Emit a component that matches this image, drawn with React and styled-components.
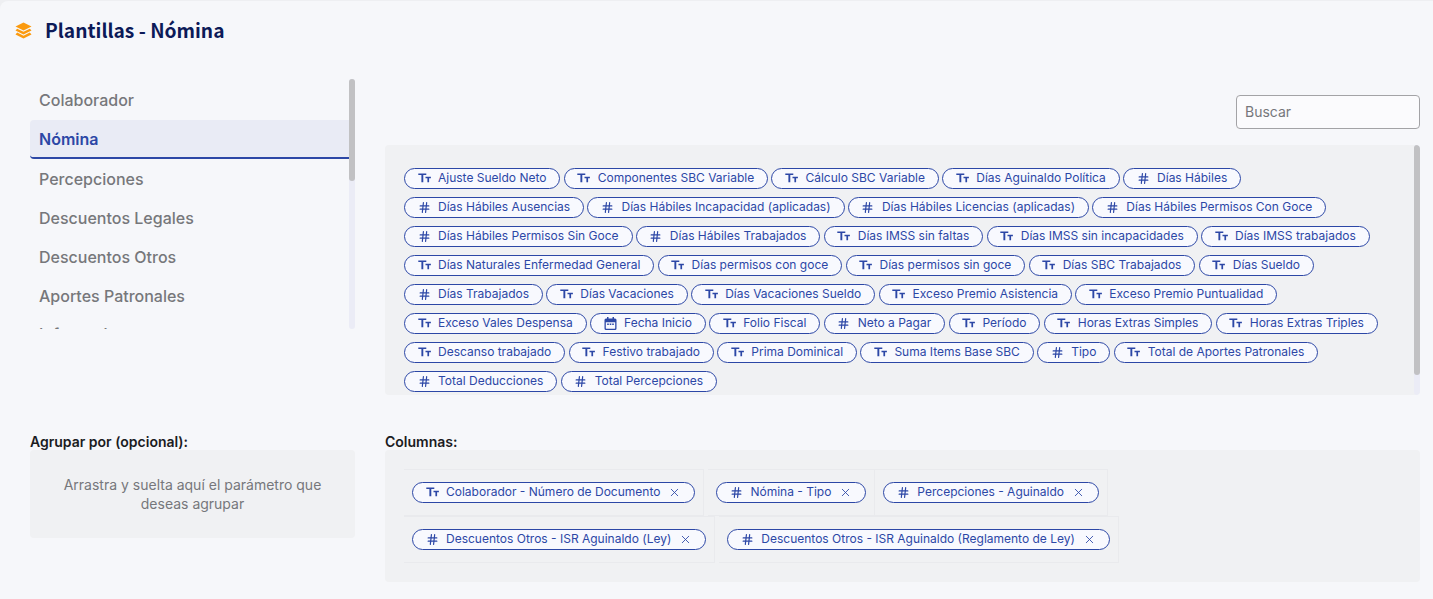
import React from "react";
import styled, { createGlobalStyle } from "styled-components";
import { Hash, X } from "lucide-react";

const GlobalStyle = createGlobalStyle`
  html, body {
    margin: 0;
    padding: 0;
    height: 100%;
    background: #eeeff2;
  }
  * {
    box-sizing: border-box;
  }
  #root {
    height: 100%;
  }
`;

const Page = styled.div`
  height: 599px;
  margin-top: 1px;
  padding: 0 13px 0 30px;
  background: #f6f7fa;
  border-top-left-radius: 8px;
  font-family: Inter, "Liberation Sans", sans-serif;
  overflow: hidden;
`;

const Header = styled.header`
  display: flex;
  align-items: center;
  gap: 13px;
  height: 58px;
  margin-left: -15px;
`;

const Title = styled.h1`
  margin: 0;
  color: #0c1a58;
  font-family: "Noto Sans CJK JP", "Noto Sans", sans-serif;
  font-size: 19.2px;
  font-weight: 700;
`;

const Top = styled.section`
  display: grid;
  grid-template-columns: 325px 1fr;
  column-gap: 30px;
  height: 337px;
  padding-top: 20px;
`;

const Bottom = styled.section`
  display: grid;
  grid-template-columns: 325px 1fr;
  column-gap: 30px;
  margin-top: 37px;
`;

const SideList = styled.nav`
  height: 250px;
  overflow: hidden;
  position: relative;
  padding-top: 2px;
`;

const Track = styled.div`
  position: absolute;
  top: 0;
  right: 0;
  width: 6px;
  height: 100%;
  background: #ebecf6;
  border-radius: 3px;
`;

const Thumb = styled.div`
  width: 6px;
  height: ${(p) => p.$size}px;
  background: #c1c1c3;
  border-radius: 3px;
`;

const SideItem = styled.div`
  display: flex;
  align-items: center;
  width: 319px;
  height: ${(p) => (p.$active ? "39px" : "39.2px")};
  margin-bottom: ${(p) => (p.$active ? "1px" : "0")};
  padding-left: 9px;
  font-size: 16px;
  font-weight: ${(p) => (p.$active ? 600 : 500)};
  color: ${(p) => (p.$active ? "#2c47a6" : "#76777b")};
  background: ${(p) => (p.$active ? "#e9ebf5" : "transparent")};
  border-bottom: 2px solid ${(p) => (p.$active ? "#2c47a6" : "transparent")};
  border-radius: 4px 0 0 4px;
  &:nth-child(7) {
    margin-top: -2px;
  }
`;

const RightColumn = styled.div`
  display: flex;
  flex-direction: column;
`;

const SearchRow = styled.div`
  display: flex;
  justify-content: flex-end;
  padding: 16px 0;
`;

const SearchInput = styled.input`
  width: 184px;
  height: 34px;
  padding: 0 8px 2px;
  background: #fbfbfd;
  border: 1px solid #a3a3a6;
  border-radius: 4px;
  font-family: inherit;
  font-size: 14px;
  outline: none;
  &::placeholder {
    color: #76777b;
    opacity: 1;
  }
`;

const Panel = styled.div`
  position: relative;
  height: 250px;
  background: #f0f1f3;
  border-radius: 4px;
  padding: 23px 19px 0;
  overflow: hidden;
`;

const ChipWrap = styled.div`
  display: flex;
  flex-wrap: wrap;
  gap: 8px 3.3px;
  width: 980px;
`;

const Chip = styled.span`
  display: inline-flex;
  align-items: center;
  height: 21px;
  padding: 0 13px 2px;
  color: #2c47a6;
  background: #f8f9fe;
  border: 1px solid #2c47a6;
  border-radius: 11px;
  font-size: 12px;
  white-space: nowrap;
  svg {
    flex: none;
  }
`;

const ChipIcon = styled.span`
  display: inline-flex;
  justify-content: center;
  width: 12px;
  margin: 1px 8px 0 0;
`;

const Close = styled(X)`
  margin: 1px 0 0 8px;
`;

const Label = styled.div`
  height: 17px;
  color: #1b1c1f;
  font-size: 14px;
  font-weight: 600;
  line-height: 17px;
  white-space: nowrap;
`;

const GroupBox = styled.div`
  display: flex;
  align-items: center;
  justify-content: center;
  height: 88px;
  padding: 0 30px;
  color: #76777b;
  background: #f0f1f3;
  border-radius: 4px;
  font-size: 14px;
  line-height: 19px;
  text-align: center;
`;

const ColumnsBox = styled.div`
  height: 132px;
  padding: 19px;
  background: #f0f1f3;
  border-radius: 4px;
`;

const ColumnRow = styled.div`
  display: flex;
  height: 47px;
`;

const ColumnCell = styled.div`
  display: flex;
  align-items: center;
  padding: 0 8px;
  margin-right: 4px;
  border: 1px solid #e9eaed;
  border-left: 0;
  &:nth-child(3) {
    margin-left: -4px;
  }
`;

const OrangeLayers = () => (
  <svg width="17" height="17" viewBox="0 0 17 17" fill="#fb9a0e">
    <path d="M8.500.500 16.500 4.500 8.500 8.500.500 4.500z" />
    <path d="M2.200 6.700 8.500 9.800 14.800 6.700 16.500 8.400 8.500 12.400.500 8.400z" />
    <path d="M2.200 10.600 8.500 13.700 14.800 10.600 16.500 12.400 8.500 16.500.500 12.400z" />
  </svg>
);

const TextIcon = () => (
  <svg width="13" height="12" viewBox="0 0 13 12" fill="currentColor">
    <path d="M0.300 1.500h8v1.600H5.300V10.300H3.400V3.100H0.300z" />
    <path d="M7.500 4.800h5.400v1.400h-1.800v4.100H9.400V6.200H7.500z" />
  </svg>
);

const CalendarIcon = () => (
  <svg width="13" height="13" viewBox="0 0 13 13" fill="currentColor">
    <path d="M3 0h1.500v1.500h4V0H10v1.500h1A1.500 1.500 0 0 1 12.500 3v8.500A1.500 1.500 0 0 1 11 13H2A1.500 1.500 0 0 1 .5 11.500V3A1.500 1.500 0 0 1 2 1.500h1zM1.800 5.200v6.100c0 .3.200.5.500.5h8.400c.3 0 .5-.2.500-.5V5.200z" />
    <path d="M3.200 6.500h1.600v1.500H3.200zM5.700 6.500h1.600v1.500H5.700zM8.200 6.500h1.600v1.500H8.200z" />
  </svg>
);

const icons = {
  t: <TextIcon />,
  h: <Hash size={13} strokeWidth={2.2} />,
  c: <CalendarIcon />,
};

const sections = [
  "Colaborador",
  "Nómina",
  "Percepciones",
  "Descuentos Legales",
  "Descuentos Otros",
  "Aportes Patronales",
  "Informativos",
];

const params = [
  ["t", "Ajuste Sueldo Neto"],
  ["t", "Componentes SBC Variable"],
  ["t", "Cálculo SBC Variable"],
  ["t", "Días Aguinaldo Política"],
  ["h", "Días Hábiles"],
  ["h", "Días Hábiles Ausencias"],
  ["h", "Días Hábiles Incapacidad (aplicadas)"],
  ["h", "Días Hábiles Licencias (aplicadas)"],
  ["h", "Días Hábiles Permisos Con Goce"],
  ["h", "Días Hábiles Permisos Sin Goce"],
  ["h", "Días Hábiles Trabajados"],
  ["t", "Días IMSS sin faltas"],
  ["t", "Días IMSS sin incapacidades"],
  ["t", "Días IMSS trabajados"],
  ["t", "Días Naturales Enfermedad General"],
  ["t", "Días permisos con goce"],
  ["t", "Días permisos sin goce"],
  ["t", "Días SBC Trabajados"],
  ["t", "Días Sueldo"],
  ["h", "Días Trabajados"],
  ["t", "Días Vacaciones"],
  ["t", "Días Vacaciones Sueldo"],
  ["t", "Exceso Premio Asistencia"],
  ["t", "Exceso Premio Puntualidad"],
  ["t", "Exceso Vales Despensa"],
  ["c", "Fecha Inicio"],
  ["t", "Folio Fiscal"],
  ["h", "Neto a Pagar"],
  ["t", "Período"],
  ["t", "Horas Extras Simples"],
  ["t", "Horas Extras Triples"],
  ["t", "Descanso trabajado"],
  ["t", "Festivo trabajado"],
  ["t", "Prima Dominical"],
  ["t", "Suma Items Base SBC"],
  ["h", "Tipo"],
  ["t", "Total de Aportes Patronales"],
  ["h", "Total Deducciones"],
  ["h", "Total Percepciones"],
];

const columnRows = [
  [
    ["t", "Colaborador - Número de Documento"],
    ["h", "Nómina - Tipo"],
    ["h", "Percepciones - Aguinaldo"],
  ],
  [
    ["h", "Descuentos Otros - ISR Aguinaldo (Ley)"],
    ["h", "Descuentos Otros - ISR Aguinaldo (Reglamento de Ley)"],
  ],
];

export default function App() {
  return (
    <>
      <GlobalStyle />
      <Page>
        <Header>
          <OrangeLayers />
          <Title>Plantillas - Nómina</Title>
        </Header>
        <Top>
          <SideList>
            {sections.map((s) => (
              <SideItem key={s} $active={s === "Nómina"}>
                {s}
              </SideItem>
            ))}
            <Track>
              <Thumb $size={102} />
            </Track>
          </SideList>
          <RightColumn>
            <SearchRow>
              <SearchInput placeholder="Buscar" />
            </SearchRow>
            <Panel>
              <ChipWrap>
                {params.map(([icon, text]) => (
                  <Chip key={text}>
                    <ChipIcon>{icons[icon]}</ChipIcon>
                    {text}
                  </Chip>
                ))}
              </ChipWrap>
              <Track>
                <Thumb $size={230} />
              </Track>
            </Panel>
          </RightColumn>
        </Top>
        <Bottom>
          <div>
            <Label>Agrupar por (opcional):</Label>
            <GroupBox>Arrastra y suelta aquí el parámetro que deseas agrupar</GroupBox>
          </div>
          <div>
            <Label>Columnas:</Label>
            <ColumnsBox>
              {columnRows.map((row, i) => (
                <ColumnRow key={i}>
                  {row.map(([icon, text]) => (
                    <ColumnCell key={text}>
                      <Chip>
                        <ChipIcon>{icons[icon]}</ChipIcon>
                        {text}
                        <Close size={13} strokeWidth={1.6} />
                      </Chip>
                    </ColumnCell>
                  ))}
                </ColumnRow>
              ))}
            </ColumnsBox>
          </div>
        </Bottom>
      </Page>
    </>
  );
}
